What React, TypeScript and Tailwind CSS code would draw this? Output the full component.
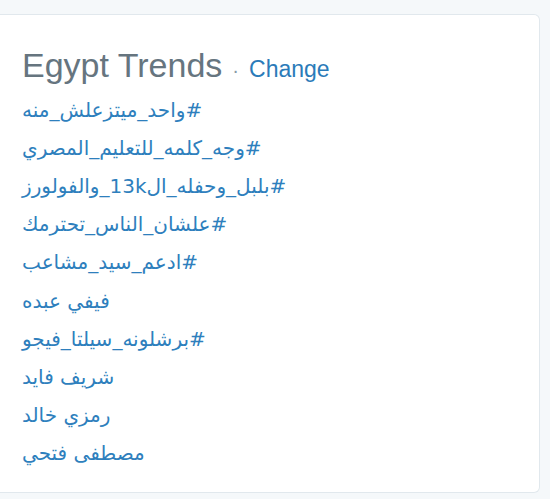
import React from "react";

const trends = [
  "#واحد_ميتزعلش_منه",
  "#وجه_كلمه_للتعليم_المصري",
  "#بلبل_وحفله_ال13k_والفولورز",
  "#علشان_الناس_تحترمك",
  "#ادعم_سيد_مشاعب",
  "فيفي عبده",
  "#برشلونه_سيلتا_فيجو",
  "شريف فايد",
  "رمزي خالد",
  "مصطفى فتحي",
];

const App = () => {
  return (
    <div className="w-[550px] h-[499px] bg-[#f5f8fa] pt-[14px] pr-[10px] pb-[6px] overflow-hidden">
      <div className="h-full bg-white border border-l-0 border-[#e1e8ed] rounded-r-[6px] pl-[22px] pt-[30px]">
        {/* Title */}
        <div className="flex items-baseline" style={{ fontFamily: '"Liberation Sans", Arial, sans-serif' }}>
          <h2 className="text-[34px] leading-[40px] text-[#66757f]">Egypt Trends</h2>
          <span className="text-[20px] text-[#8899a6] mx-[10px]">·</span>
          <a className="text-[23px] text-[#2b7bb9]">Change</a>
        </div>

        {/* Trends */}
        <ul className="mt-[4px] flex flex-col items-start" style={{ fontFamily: '"DejaVu Sans", sans-serif' }}>
          {trends.map((t) => (
            <li key={t} dir="rtl" className="text-[20px] leading-[38.2px] text-[#2e7fbd]">
              {t}
            </li>
          ))}
        </ul>
      </div>
    </div>
  );
};

export default App;
